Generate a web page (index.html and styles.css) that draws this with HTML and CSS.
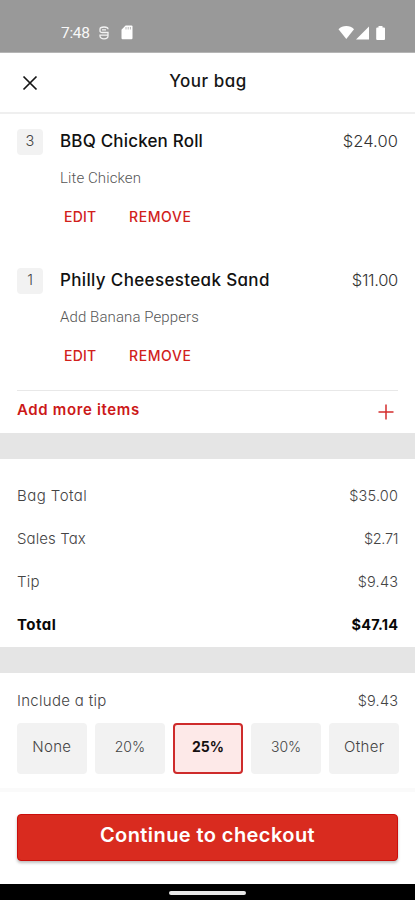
FILE: index.html
```html
<!DOCTYPE html>
<html lang="en">
<head>
<meta charset="utf-8">
<title>Your bag</title>
<link rel="stylesheet" href="styles.css">
</head>
<body>
<div class="status">
  <span class="clock">7:48</span>
  <svg class="s-icon" width="12" height="16" viewBox="0 0 12 16"><path d="M2 4.200C2 2.800 3.600 2 6 2s4 .8 4 2.200M2 4v2c0 1.200 1 1.500 2.500 1.500H10V11c0 1.700-1.600 2.800-4 2.800S2 12.700 2 11v-.8h8M4 4.800h4" fill="none" stroke="#f2f2f2" stroke-width="1.300"/></svg>
  <svg class="sd-icon" width="12" height="15" viewBox="0 0 12 15"><path d="M4.600 .5H10.500Q11.500 .5 11.500 1.500V13Q11.500 14.200 10.500 14.200H1.500Q.5 14.200 .5 13V4.800Z" fill="#fff"/><path d="M5 2v2.500M7.200 2v2.500M9.400 2v2.500" stroke="#999" stroke-width=".7"/></svg>
  <span class="grow"></span>
  <svg class="signals" width="49" height="16" viewBox="0 0 49 16" fill="#fff"><path d="M.5 4.200Q3.600 1 8.300 1T16 4.200L8.300 14Z"/><path d="M31 1.500V14.500H18Z"/><path d="M40.500 1h4v1.500H46q1 0 1 1V14q0 1-1 1H39.200q-1 0-1-1V3.500q0-1 1-1h1.300Z"/></svg>
</div>
<header class="header">
  <svg class="close" width="16" height="16" viewBox="0 0 16 16"><path d="M1.500 1.500l13 13M14.500 1.500l-13 13" stroke="#151515" stroke-width="1.700" fill="none"/></svg>
  <h1>Your bag</h1>
</header>
<main>
  <section class="items">
    <article class="item">
      <span class="qty">3</span>
      <div class="info">
        <div class="line"><h2 class="name-a">BBQ Chicken Roll</h2><span class="price">$24.00</span></div>
        <p>Lite Chicken</p>
        <div class="actions"><a class="edit">EDIT</a><a class="remove">REMOVE</a></div>
      </div>
    </article>
    <article class="item">
      <span class="qty">1</span>
      <div class="info">
        <div class="line"><h2 class="name-b">Philly Cheesesteak Sand</h2><span class="price price-b">$11.00</span></div>
        <p>Add Banana Peppers</p>
        <div class="actions"><a class="edit">EDIT</a><a class="remove">REMOVE</a></div>
      </div>
    </article>
    <div class="add"><span>Add more items</span>
      <svg width="16" height="16" viewBox="0 0 16 16"><path d="M8 .5v15M.5 8h15" stroke="#d42c2c" stroke-width="1.500"/></svg></div>
  </section>
  <section class="totals">
    <div class="row"><span>Bag Total</span><span class="amount">$35.00</span></div>
    <div class="row"><span class="tax">Sales Tax</span><span class="amount tight">$2.71</span></div>
    <div class="row"><span class="tip">Tip</span><span class="amount">$9.43</span></div>
    <div class="row bold"><span>Total</span><span class="amount">$47.14</span></div>
  </section>
  <section class="tips">
    <div class="tip-head"><span>Include a tip</span><span class="amount">$9.43</span></div>
    <div class="options">
      <span class="option wide">None</span><span class="option">20%</span><span class="option selected">25%</span><span class="option">30%</span><span class="option wide">Other</span>
    </div>
  </section>
</main>
<footer class="footer"><button>Continue to checkout</button></footer>
<div class="nav"><span></span></div>
</body>
</html>
```
FILE: styles.css
```css
* { box-sizing: border-box; }
body {
  margin: 0; height: 900px; display: flex; flex-direction: column; overflow: hidden;
  background: #fff; color: #444; font-family: Inter, "Open Sans", sans-serif;
  font-feature-settings: "cv11" 1; font-size: 14px; line-height: 20px;
}
h1, h2, p { margin: 0; }
.status { height: 53px; flex: none; background: #999; display: flex; align-items: center; padding: 13px 28px 0 61px; border-bottom: 1px solid #b5b5b5; }
.clock { color: #f8f8f8; font: 400 15.500px/18px Roboto, sans-serif; width: 37px; letter-spacing: -.3px; }
.sd-icon { margin-left: 11px; }
.grow { flex: 1; }
.header { height: 59px; flex: none; display: flex; align-items: center; padding: 0 22px; }
.close { margin-top: 1px; }
h1 { flex: 1; text-align: center; margin: -3px 15px 0 0; font-size: 17px; line-height: 24px; font-weight: 500; color: #161616; letter-spacing: .5px; }
main { flex: none; height: 676px; border-top: 2px solid #efefef; }
.items { height: 319px; }
.item { height: 138.500px; padding: 15px 17px 0; display: flex; }
.qty { width: 26px; height: 26px; margin-right: 17px; background: #f2f2f2; border-radius: 4px; text-align: center; line-height: 23px; font-size: 14.500px; font-weight: 300; }
.info { flex: 1; }
.line { display: flex; justify-content: space-between; height: 26px; line-height: 25px; }
h2 { font-size: 17px; line-height: 25px; font-weight: 500; color: #111; letter-spacing: .18px; }
.name-b { letter-spacing: .35px; }
.price { font-size: 16.500px; font-weight: 300; color: #333; letter-spacing: .1px; }
.price-b { letter-spacing: -.3px; }
.item p { font: 300 15px/20px Roboto, sans-serif; color: #555; margin-top: 13px; letter-spacing: .1px; }
.actions { display: flex; margin-top: 19px; padding-left: 4px; color: #d1211b; font-weight: 500; font-size: 14px; letter-spacing: .6px; }
.edit { width: 65px; letter-spacing: .2px; }
.add { height: 43px; margin: -1px 17px 0; border-top: 1px solid #e8e8e8; display: flex; justify-content: space-between; align-items: center; color: #cc1818; font-weight: 600; font-size: 15px; letter-spacing: .65px; padding: 0 4px 4px 0; }
.add svg { margin-top: 3px; }
.totals { height: 240px; border-top: 26px solid #e5e5e5; border-bottom: 26px solid #e5e5e5; padding: 15px 17px; }
.row { display: flex; justify-content: space-between; height: 43px; line-height: 43px; font-weight: 300; font-size: 15px; letter-spacing: .45px; }
.tax { letter-spacing: .1px; }
.tip { letter-spacing: .2px; }
.amount { font-size: 14.500px; letter-spacing: .2px; margin-right: -.2px; }
.tight { letter-spacing: -.3px; }
.bold { font-weight: 700; color: #080808; }
.tips { padding: 18px 17px 0; height: 115px; }
.tip-head { display: flex; justify-content: space-between; line-height: 20px; font-weight: 300; font-size: 15px; letter-spacing: .3px; }
.options { display: grid; grid-template-columns: repeat(5, 1fr); gap: 8.500px; margin: 12px -1px 0 0; }
.option { height: 51px; line-height: 48px; border-radius: 4px; background: #f2f2f2; text-align: center; font-weight: 300; }
.wide { font-size: 15px; letter-spacing: .3px; }
.selected { background: #fde9e8; border: 2px solid #ce2b2b; line-height: 44px; font-weight: 700; color: #151010; }
.footer { height: 96px; flex: none; padding: 22px 17px 0; border-top: 4px solid #fafafa; }
button { width: 100%; height: 47px; display: block; border: 1px solid #cb0e0b; border-radius: 4px; background: #d92b1f; color: #fff; font: 600 20px/40px Inter, sans-serif; letter-spacing: .42px; padding: 0 0 5px; font-feature-settings: "cv11" 1; box-shadow: 0 2px 3px rgba(0,0,0,.25); }
.nav { height: 16px; flex: none; background: #000; display: flex; justify-content: center; padding-top: 7px; }
.nav span { width: 77px; height: 4px; border-radius: 2px; background: #e8e8e8; }
```
